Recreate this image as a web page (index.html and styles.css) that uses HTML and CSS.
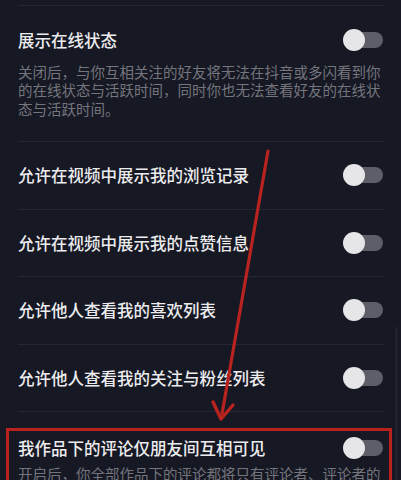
FILE: index.html
```html
<!DOCTYPE html>
<html lang="zh-CN">
<head>
<meta charset="utf-8">
<link rel="stylesheet" href="styles.css">
</head>
<body>
<div class="page">
  <div class="sep first"></div>
  <div class="section">
    <div class="head">
      <span class="title">展示在线状态</span>
      <span class="toggle"></span>
    </div>
    <p class="desc">关闭后，与你互相关注的好友将无法在抖音或多闪看到你的在线状态与活跃时间，同时你也无法查看好友的在线状态与活跃时间。</p>
  </div>
  <div class="sep"></div>
  <div class="row"><span class="title">允许在视频中展示我的浏览记录</span><span class="toggle"></span></div>
  <div class="sep"></div>
  <div class="row"><span class="title">允许在视频中展示我的点赞信息</span><span class="toggle"></span></div>
  <div class="sep"></div>
  <div class="row"><span class="title">允许他人查看我的喜欢列表</span><span class="toggle"></span></div>
  <div class="sep"></div>
  <div class="row"><span class="title">允许他人查看我的关注与粉丝列表</span><span class="toggle"></span></div>
  <div class="sep"></div>
  <div class="section last">
    <div class="head">
      <span class="title">我作品下的评论仅朋友间互相可见</span>
      <span class="toggle"></span>
    </div>
    <p class="desc">开启后，你全部作品下的评论都将只有评论者、评论者的朋友和你可见。</p>
  </div>
</div>
<div class="scrollbar"></div>
<div class="highlight"></div>
<svg class="arrow" width="401" height="480" viewBox="0 0 401 480">
  <line x1="268" y1="151" x2="222" y2="414" stroke="#b9231f" stroke-width="3.2" stroke-linecap="round"/>
  <polyline points="213,402 221,419 233,405" fill="none" stroke="#b9231f" stroke-width="3.4" stroke-linecap="round" stroke-linejoin="round"/>
</svg>
</body>
</html>
```

FILE: styles.css
```css
html, body {
  margin: 0;
  padding: 0;
}
body {
  width: 401px;
  height: 480px;
  overflow: hidden;
  position: relative;
  background: #161823;
  font-family: "Noto Sans CJK SC", "Noto Sans", sans-serif;
}
.page {
  padding: 0 18px;
}
.sep {
  height: 1px;
  background: #252631;
}
.sep.first {
  margin-top: 5px;
}
.section {
  padding: 22px 0 22.75px;
}
.section.last {
  padding: 23.5px 0 0;
}
.head, .row {
  display: flex;
  align-items: center;
  justify-content: space-between;
}
.head {
  height: 24px;
}
.row {
  height: 66.5px;
}
.title {
  color: #ececee;
  font-size: 16.5px;
  font-weight: 500;
  line-height: 24px;
  white-space: nowrap;
}
.desc {
  margin: 10.75px 0 0;
  color: #74757d;
  font-size: 14.5px;
  line-height: 18.5px;
}
.section.last .desc {
  margin-top: 5.5px;
}
.toggle {
  position: relative;
  width: 40px;
  height: 22px;
  flex: none;
}
.toggle::before {
  content: "";
  position: absolute;
  right: 0;
  top: 3px;
  width: 36px;
  height: 16px;
  border-radius: 8px;
  background: #5d5e67;
}
.toggle::after {
  content: "";
  position: absolute;
  left: 0;
  top: 0;
  width: 22px;
  height: 22px;
  border-radius: 50%;
  background: #e6e6e8;
}
.scrollbar {
  position: absolute;
  left: 395px;
  top: 327px;
  width: 3px;
  height: 160px;
  background: #1f202b;
}
.highlight {
  position: absolute;
  left: 6px;
  top: 428px;
  width: 380px;
  height: 70px;
  border: 3px solid #b8211d;
}
.arrow {
  position: absolute;
  left: 0;
  top: 0;
  pointer-events: none;
}
```
